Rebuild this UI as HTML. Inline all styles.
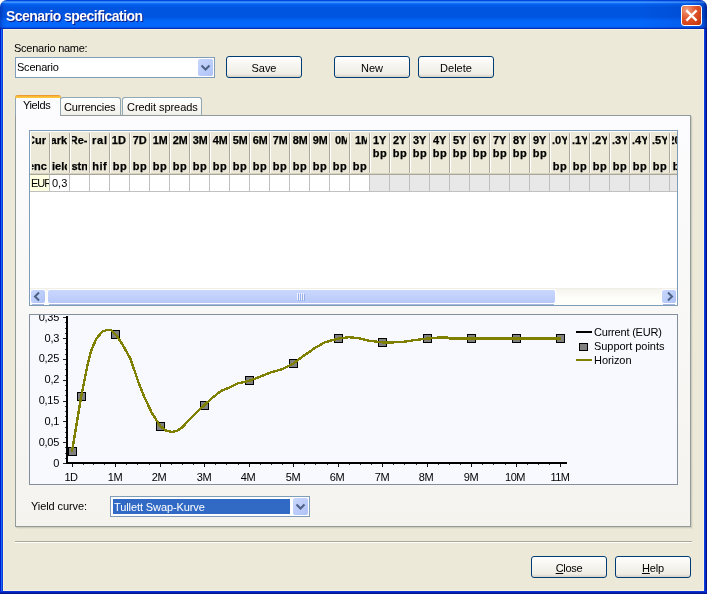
<!DOCTYPE html><html><head><meta charset="utf-8"><title>Scenario specification</title><style>
html,body{margin:0;padding:0;}
body{width:707px;height:594px;overflow:hidden;background:#fff;position:relative;font-family:"Liberation Sans",sans-serif;font-size:11px;line-height:13px;color:#000;}
.abs,.t,.tb{position:absolute;}
.t{white-space:nowrap;font-size:11px;line-height:13px;}
.tb{white-space:nowrap;font-size:11px;line-height:13px;font-weight:bold;}
#win{will-change:transform;position:absolute;left:0;top:0;width:707px;height:594px;border-radius:7px 7px 0 0;overflow:hidden;background:#ECE9D8;}
#title{position:absolute;left:0;top:0;width:707px;height:29px;background:linear-gradient(to bottom,#0046E0 0px,#0046E0 1px,#2C7EF6 1px,#2C7EF6 2px,#3D95FF 2px,#3D95FF 3px,#0A6CFA 3px,#0A6CFA 4px,#0462EE 4px,#0462EE 5px,#025BE6 5px,#025BE6 6px,#0259E4 6px,#0259E4 7px,#0055E0 7px,#0055E0 17px,#0158E6 17px,#0158E6 18px,#025CEB 18px,#025CEB 19px,#0260F0 19px,#0260F0 20px,#0364F6 20px,#0364F6 21px,#0466FA 21px,#0466FA 27px,#0354E3 27px,#0354E3 28px,#0030C0 28px,#0030C0 29px);}
#ttext{position:absolute;left:6px;top:8px;font-weight:bold;font-size:14px;line-height:16px;color:#fff;text-shadow:1px 1px 0 #0A1883;white-space:nowrap;}
#bl{position:absolute;left:0;top:29px;width:3px;height:565px;background:linear-gradient(to right,#0019CF 0,#0019CF 1px,#166AEE 1px,#166AEE 2px,#0A3CE0 2px,#0A3CE0 3px);}
#br{position:absolute;left:704px;top:29px;width:3px;height:565px;background:linear-gradient(to right,#0A3CE0 0,#0A3CE0 1px,#0428C0 1px,#0428C0 2px,#00138C 2px,#00138C 3px);}
#bb{position:absolute;left:0;top:591px;width:707px;height:3px;background:linear-gradient(to bottom,#0A32D8 0,#0A32D8 1px,#0424B8 1px,#0424B8 2px,#00138C 2px,#00138C 3px);}
#hl{position:absolute;left:3px;top:29px;width:701px;height:1px;background:#FBF3DC;}
#close{position:absolute;left:681px;top:5px;width:21px;height:21px;box-sizing:border-box;border:1px solid #fff;border-radius:3px;background:radial-gradient(circle at 25% 20%,#F0A284 0%,#E2582E 40%,#D4441A 70%,#BE3208 100%);}
.btn{position:absolute;width:76px;height:22px;box-sizing:border-box;border:1px solid #003C74;border-radius:3px;background:linear-gradient(to bottom,#FFFFFF 0%,#F6F5F0 40%,#EFEDE4 85%,#D6D0C5 100%);text-align:center;font-size:11px;line-height:22px;}
.combo{position:absolute;width:200px;height:21px;box-sizing:border-box;border:1px solid #7F9DB9;background:#fff;}
.cbtn{position:absolute;right:1px;top:1px;width:15px;height:17px;border-radius:2px;background:linear-gradient(135deg,#C9D7FD 0%,#B9CBF9 60%,#AFC2F7 100%);}
.tab{position:absolute;box-sizing:border-box;border:1px solid #91A7B4;border-bottom:none;border-radius:3px 3px 0 0;background:linear-gradient(to bottom,#FFFFFF,#F3F2EC 90%,#ECEBE6);}
#page{position:absolute;left:15px;top:115px;width:676px;height:412px;box-sizing:border-box;border:1px solid #919B9C;background:linear-gradient(to bottom,#FCFCFE,#F4F3EE);box-shadow:1px 1px 0 #CFCCBC,2px 2px 0 #E2DFD0;}
#grid{position:absolute;left:29px;top:130px;width:649px;height:176px;box-sizing:border-box;border:1px solid #7F9DB9;background:#fff;overflow:hidden;}
#chart{position:absolute;left:29px;top:314px;width:649px;height:171px;box-sizing:border-box;border:1px solid #848E9C;background:#F8F8FF;overflow:hidden;}
.hc{position:absolute;top:1px;width:20px;height:43px;background:#ECE9D8;}
.hc i{position:absolute;left:18px;top:1px;width:1px;height:40px;background:#ACA899;}
.hc b{position:absolute;left:19px;top:1px;width:1px;height:40px;background:#fff;}
.hc .clip{position:absolute;left:1px;top:0;width:15px;height:43px;overflow:hidden;}
.hc .clip span{position:absolute;white-space:nowrap;font-weight:bold;-webkit-text-stroke:0.25px #000;font-size:11px;line-height:13px;}
</style></head><body>
<div id="win">
<div id="title"></div><div class="abs" style="left:0;top:0;width:707px;height:29px;background:linear-gradient(to right,rgba(0,10,120,0.35) 0px,rgba(0,10,120,0.1) 3px,rgba(0,10,120,0) 6px,rgba(0,10,120,0) 640px,rgba(0,10,120,0.1) 690px,rgba(0,10,120,0.25) 703px,rgba(0,0,90,0.6) 707px)"></div>
<div id="ttext" style="letter-spacing:-0.55px">Scenario specification</div>
<div id="close"><svg width="19" height="19" viewBox="0 0 19 19" style="position:absolute;left:0;top:0"><path d="M4.4 4.4 L14.6 14.6 M14.6 4.4 L4.4 14.6" stroke="#fff" stroke-width="2.3" stroke-linecap="butt"/></svg></div>
<div id="hl"></div><div class="abs" style="left:3px;top:29px;width:1px;height:562px;background:#FBF1D9"></div><div class="abs" style="left:3px;top:590px;width:701px;height:1px;background:#FBF1D9"></div><div class="abs" style="left:703px;top:29px;width:1px;height:562px;background:#FBF1D9"></div>
<div id="bl"></div><div id="br"></div><div id="bb"></div>
<span class="t" style="left:14px;top:42px;letter-spacing:-0.26px">Scenario name:</span>
<div class="combo" style="left:15px;top:57px"><span class="t" style="left:1px;top:3px;letter-spacing:-0.22px">Scenario</span><div class="cbtn"><svg width="15" height="17" style="position:absolute;left:0;top:0"><path d="M3.5 6.5 L7.5 10.5 L11.5 6.5" fill="none" stroke="#4D6185" stroke-width="2"/></svg></div></div>
<div class="btn" style="left:226px;top:56px;letter-spacing:-0.08px">Save</div>
<div class="btn" style="left:334px;top:56px;letter-spacing:0.00px">New</div>
<div class="btn" style="left:418px;top:56px;letter-spacing:0.00px">Delete</div>
<div id="page"></div>
<div class="tab" style="left:60px;top:97px;width:61px;height:18px"></div><span class="t" style="left:64px;top:101px;letter-spacing:-0.18px">Currencies</span>
<div class="tab" style="left:122px;top:97px;width:80px;height:18px"></div><span class="t" style="left:127px;top:101px;letter-spacing:-0.06px">Credit spreads</span>
<div class="tab" style="left:15px;top:95px;width:46px;height:21px;background:#FCFCFE;border-top:none"></div>
<div class="abs" style="left:15px;top:95px;width:46px;height:3px;border-radius:3px 3px 0 0;background:linear-gradient(to bottom,#E68B2C 0,#F5A937 1px,#FFC73C 2px,#FFC73C 3px)"></div>
<span class="t" style="left:23px;top:99px;letter-spacing:-0.38px">Yields</span>
<div id="grid">
<div class="abs" style="left:0;top:0;width:647px;height:44px;background:#fff"></div>
<div class="hc" style="left:1px"><i></i><b></b><div class="clip"><span style="left:-5.0px;top:2px">Cur</span><span style="left:-4.0px;top:28px">enc</span></div></div>
<div class="hc" style="left:21px"><i></i><b></b><div class="clip"><span style="left:-1.4px;top:2px">ark</span><span style="left:0.0px;top:28px">ield</span></div></div>
<div class="hc" style="left:41px"><i></i><b></b><div class="clip"><span style="left:-2.2px;top:2px">Re-</span><span style="left:-0.5px;top:28px">stn</span></div></div>
<div class="hc" style="left:61px"><i></i><b></b><div class="clip"><span style="left:0.0px;top:2px;letter-spacing:0.8px">ral</span><span style="left:0.2px;top:28px;letter-spacing:0.5px">hif</span></div></div>
<div class="hc" style="left:81px"><i></i><b></b><div class="clip"><span style="left:-0.2px;top:2px">1D</span><span style="left:0.8px;top:28px;letter-spacing:0.5px">bp</span></div></div>
<div class="hc" style="left:101px"><i></i><b></b><div class="clip"><span style="left:0.7px;top:2px">7D</span><span style="left:0.8px;top:28px;letter-spacing:0.5px">bp</span></div></div>
<div class="hc" style="left:121px"><i></i><b></b><div class="clip"><span style="left:0.7px;top:2px">1M</span><span style="left:0.8px;top:28px;letter-spacing:0.5px">bp</span></div></div>
<div class="hc" style="left:141px"><i></i><b></b><div class="clip"><span style="left:0.7px;top:2px">2M</span><span style="left:0.8px;top:28px;letter-spacing:0.5px">bp</span></div></div>
<div class="hc" style="left:161px"><i></i><b></b><div class="clip"><span style="left:0.7px;top:2px">3M</span><span style="left:0.8px;top:28px;letter-spacing:0.5px">bp</span></div></div>
<div class="hc" style="left:181px"><i></i><b></b><div class="clip"><span style="left:0.7px;top:2px">4M</span><span style="left:0.8px;top:28px;letter-spacing:0.5px">bp</span></div></div>
<div class="hc" style="left:201px"><i></i><b></b><div class="clip"><span style="left:0.7px;top:2px">5M</span><span style="left:0.8px;top:28px;letter-spacing:0.5px">bp</span></div></div>
<div class="hc" style="left:221px"><i></i><b></b><div class="clip"><span style="left:0.7px;top:2px">6M</span><span style="left:0.8px;top:28px;letter-spacing:0.5px">bp</span></div></div>
<div class="hc" style="left:241px"><i></i><b></b><div class="clip"><span style="left:0.7px;top:2px">7M</span><span style="left:0.8px;top:28px;letter-spacing:0.5px">bp</span></div></div>
<div class="hc" style="left:261px"><i></i><b></b><div class="clip"><span style="left:0.7px;top:2px">8M</span><span style="left:0.8px;top:28px;letter-spacing:0.5px">bp</span></div></div>
<div class="hc" style="left:281px"><i></i><b></b><div class="clip"><span style="left:0.7px;top:2px">9M</span><span style="left:0.8px;top:28px;letter-spacing:0.5px">bp</span></div></div>
<div class="hc" style="left:301px"><i></i><b></b><div class="clip"><span style="left:3.0px;top:2px">0M</span><span style="left:0.8px;top:28px;letter-spacing:0.5px">bp</span></div></div>
<div class="hc" style="left:321px"><i></i><b></b><div class="clip"><span style="left:2.9px;top:2px">1M</span><span style="left:0.8px;top:28px;letter-spacing:0.5px">bp</span></div></div>
<div class="hc" style="left:341px"><i></i><b></b><div class="clip"><span style="left:1.0px;top:2px">1Y</span><span style="left:0.8px;top:15px;letter-spacing:0.5px">bp</span></div></div>
<div class="hc" style="left:361px"><i></i><b></b><div class="clip"><span style="left:1.0px;top:2px">2Y</span><span style="left:0.8px;top:15px;letter-spacing:0.5px">bp</span></div></div>
<div class="hc" style="left:381px"><i></i><b></b><div class="clip"><span style="left:1.0px;top:2px">3Y</span><span style="left:0.8px;top:15px;letter-spacing:0.5px">bp</span></div></div>
<div class="hc" style="left:401px"><i></i><b></b><div class="clip"><span style="left:1.0px;top:2px">4Y</span><span style="left:0.8px;top:15px;letter-spacing:0.5px">bp</span></div></div>
<div class="hc" style="left:421px"><i></i><b></b><div class="clip"><span style="left:1.0px;top:2px">5Y</span><span style="left:0.8px;top:15px;letter-spacing:0.5px">bp</span></div></div>
<div class="hc" style="left:441px"><i></i><b></b><div class="clip"><span style="left:1.0px;top:2px">6Y</span><span style="left:0.8px;top:15px;letter-spacing:0.5px">bp</span></div></div>
<div class="hc" style="left:461px"><i></i><b></b><div class="clip"><span style="left:1.0px;top:2px">7Y</span><span style="left:0.8px;top:15px;letter-spacing:0.5px">bp</span></div></div>
<div class="hc" style="left:481px"><i></i><b></b><div class="clip"><span style="left:1.0px;top:2px">8Y</span><span style="left:0.8px;top:15px;letter-spacing:0.5px">bp</span></div></div>
<div class="hc" style="left:501px"><i></i><b></b><div class="clip"><span style="left:1.0px;top:2px">9Y</span><span style="left:0.8px;top:15px;letter-spacing:0.5px">bp</span></div></div>
<div class="hc" style="left:521px"><i></i><b></b><div class="clip"><span style="left:0.0px;top:2px">.0Y</span><span style="left:0.8px;top:28px;letter-spacing:0.5px">bp</span></div></div>
<div class="hc" style="left:541px"><i></i><b></b><div class="clip"><span style="left:0.0px;top:2px">.1Y</span><span style="left:0.8px;top:28px;letter-spacing:0.5px">bp</span></div></div>
<div class="hc" style="left:561px"><i></i><b></b><div class="clip"><span style="left:0.0px;top:2px">.2Y</span><span style="left:0.8px;top:28px;letter-spacing:0.5px">bp</span></div></div>
<div class="hc" style="left:581px"><i></i><b></b><div class="clip"><span style="left:0.0px;top:2px">.3Y</span><span style="left:0.8px;top:28px;letter-spacing:0.5px">bp</span></div></div>
<div class="hc" style="left:601px"><i></i><b></b><div class="clip"><span style="left:0.0px;top:2px">.4Y</span><span style="left:0.8px;top:28px;letter-spacing:0.5px">bp</span></div></div>
<div class="hc" style="left:621px"><i></i><b></b><div class="clip"><span style="left:0.0px;top:2px">.5Y</span><span style="left:0.8px;top:28px;letter-spacing:0.5px">bp</span></div></div>
<div class="hc" style="left:641px"><i></i><b></b><div class="clip"><span style="left:-3.5px;top:2px">20</span><span style="left:0.8px;top:28px;letter-spacing:0.5px">bp</span></div></div>
<div class="abs" style="left:0;top:42px;width:647px;height:1px;background:#D6D2C2"></div>
<div class="abs" style="left:0;top:43px;width:647px;height:1px;background:#ACA899"></div>
<div class="abs" style="left:0;top:44px;width:647px;height:16px;background:#fff"></div>
<div class="abs" style="left:0;top:44px;width:19px;height:16px;background:#FFFFE1;overflow:hidden"><span class="t" style="left:1px;top:2px;letter-spacing:-1px">EUR</span></div>
<div class="abs" style="left:20px;top:44px;width:19px;height:16px;overflow:hidden"><span class="t" style="left:2px;top:2px">0,3</span></div>
<div class="abs" style="left:340px;top:44px;width:307px;height:16px;background:#E8E8E8"></div>
<div class="abs" style="left:19px;top:44px;width:1px;height:16px;background:#C0C0C0"></div>
<div class="abs" style="left:39px;top:44px;width:1px;height:16px;background:#C0C0C0"></div>
<div class="abs" style="left:59px;top:44px;width:1px;height:16px;background:#C0C0C0"></div>
<div class="abs" style="left:79px;top:44px;width:1px;height:16px;background:#C0C0C0"></div>
<div class="abs" style="left:99px;top:44px;width:1px;height:16px;background:#C0C0C0"></div>
<div class="abs" style="left:119px;top:44px;width:1px;height:16px;background:#C0C0C0"></div>
<div class="abs" style="left:139px;top:44px;width:1px;height:16px;background:#C0C0C0"></div>
<div class="abs" style="left:159px;top:44px;width:1px;height:16px;background:#C0C0C0"></div>
<div class="abs" style="left:179px;top:44px;width:1px;height:16px;background:#C0C0C0"></div>
<div class="abs" style="left:199px;top:44px;width:1px;height:16px;background:#C0C0C0"></div>
<div class="abs" style="left:219px;top:44px;width:1px;height:16px;background:#C0C0C0"></div>
<div class="abs" style="left:239px;top:44px;width:1px;height:16px;background:#C0C0C0"></div>
<div class="abs" style="left:259px;top:44px;width:1px;height:16px;background:#C0C0C0"></div>
<div class="abs" style="left:279px;top:44px;width:1px;height:16px;background:#C0C0C0"></div>
<div class="abs" style="left:299px;top:44px;width:1px;height:16px;background:#C0C0C0"></div>
<div class="abs" style="left:319px;top:44px;width:1px;height:16px;background:#C0C0C0"></div>
<div class="abs" style="left:339px;top:44px;width:1px;height:16px;background:#C0C0C0"></div>
<div class="abs" style="left:359px;top:44px;width:1px;height:16px;background:#C0C0C0"></div>
<div class="abs" style="left:379px;top:44px;width:1px;height:16px;background:#C0C0C0"></div>
<div class="abs" style="left:399px;top:44px;width:1px;height:16px;background:#C0C0C0"></div>
<div class="abs" style="left:419px;top:44px;width:1px;height:16px;background:#C0C0C0"></div>
<div class="abs" style="left:439px;top:44px;width:1px;height:16px;background:#C0C0C0"></div>
<div class="abs" style="left:459px;top:44px;width:1px;height:16px;background:#C0C0C0"></div>
<div class="abs" style="left:479px;top:44px;width:1px;height:16px;background:#C0C0C0"></div>
<div class="abs" style="left:499px;top:44px;width:1px;height:16px;background:#C0C0C0"></div>
<div class="abs" style="left:519px;top:44px;width:1px;height:16px;background:#C0C0C0"></div>
<div class="abs" style="left:539px;top:44px;width:1px;height:16px;background:#C0C0C0"></div>
<div class="abs" style="left:559px;top:44px;width:1px;height:16px;background:#C0C0C0"></div>
<div class="abs" style="left:579px;top:44px;width:1px;height:16px;background:#C0C0C0"></div>
<div class="abs" style="left:599px;top:44px;width:1px;height:16px;background:#C0C0C0"></div>
<div class="abs" style="left:619px;top:44px;width:1px;height:16px;background:#C0C0C0"></div>
<div class="abs" style="left:639px;top:44px;width:1px;height:16px;background:#C0C0C0"></div>
<div class="abs" style="left:659px;top:44px;width:1px;height:16px;background:#C0C0C0"></div>
<div class="abs" style="left:0;top:60px;width:647px;height:1px;background:#C0C0C0"></div>
<div class="abs" style="left:0;top:157px;width:647px;height:17px;background:linear-gradient(to bottom,#EEEDE5 0,#F6F5EF 2px,#FEFEFB 10px,#FEFEFB 17px)"></div>
<div class="abs" style="left:0px;top:158px;width:16px;height:15px;background:#fff;border-radius:3px"></div><div class="abs" style="left:1px;top:159px;width:14px;height:13px;border-radius:2px;background:linear-gradient(135deg,#C9D7FD 0%,#B9CBF9 60%,#AFC2F7 100%)"><svg width="14" height="13" style="position:absolute;left:0;top:0"><path d="M8.5 4 L4.5 8 L8.5 12" transform="translate(-0.5,-1.5)" fill="none" stroke="#4D6185" stroke-width="2"/></svg></div>
<div class="abs" style="left:631px;top:158px;width:16px;height:15px;background:#fff;border-radius:3px"></div><div class="abs" style="left:632px;top:159px;width:14px;height:13px;border-radius:2px;background:linear-gradient(135deg,#C9D7FD 0%,#B9CBF9 60%,#AFC2F7 100%)"><svg width="14" height="13" style="position:absolute;left:0;top:0"><path d="M6.5 4 L10.5 8 L6.5 12" transform="translate(-0.5,-1.5)" fill="none" stroke="#4D6185" stroke-width="2"/></svg></div>
<div class="abs" style="left:17px;top:158px;width:509px;height:15px;background:#fff;border-radius:3px"></div>
<div class="abs" style="left:18px;top:159px;width:507px;height:13px;border-radius:2px;background:linear-gradient(to bottom,#C9D7FD 0%,#C2D1FB 50%,#B7C8F8 100%)"></div>
<div class="abs" style="left:19px;top:173px;width:505px;height:1px;background:#A9B6DE"></div>
<div class="abs" style="left:2px;top:173px;width:12px;height:1px;background:#A9B6DE"></div>
<div class="abs" style="left:633px;top:173px;width:12px;height:1px;background:#A9B6DE"></div>
<div class="abs" style="left:267px;top:162px;width:1px;height:7px;background:#EEF2FE"></div>
<div class="abs" style="left:268px;top:163px;width:1px;height:7px;background:#98AEE8"></div>
<div class="abs" style="left:269px;top:162px;width:1px;height:7px;background:#EEF2FE"></div>
<div class="abs" style="left:270px;top:163px;width:1px;height:7px;background:#98AEE8"></div>
<div class="abs" style="left:271px;top:162px;width:1px;height:7px;background:#EEF2FE"></div>
<div class="abs" style="left:272px;top:163px;width:1px;height:7px;background:#98AEE8"></div>
<div class="abs" style="left:273px;top:162px;width:1px;height:7px;background:#EEF2FE"></div>
<div class="abs" style="left:274px;top:163px;width:1px;height:7px;background:#98AEE8"></div>
</div>
<div id="chart"></div>
<svg class="abs" style="left:0;top:0" width="707" height="594" viewBox="0 0 707 594">
<defs><clipPath id="cc"><rect x="30" y="315" width="647" height="169"/></clipPath></defs>
<g clip-path="url(#cc)">
<rect x="66" y="316" width="2" height="148" fill="#000"/>
<rect x="66" y="462" width="501" height="2" fill="#000"/>
<rect x="63" y="463" width="3" height="1" fill="#222"/>
<rect x="65" y="458" width="1" height="1" fill="#444"/>
<rect x="65" y="453" width="1" height="1" fill="#444"/>
<rect x="65" y="447" width="1" height="1" fill="#444"/>
<rect x="63" y="442" width="3" height="1" fill="#222"/>
<rect x="65" y="437" width="1" height="1" fill="#444"/>
<rect x="65" y="432" width="1" height="1" fill="#444"/>
<rect x="65" y="427" width="1" height="1" fill="#444"/>
<rect x="63" y="421" width="3" height="1" fill="#222"/>
<rect x="65" y="416" width="1" height="1" fill="#444"/>
<rect x="65" y="411" width="1" height="1" fill="#444"/>
<rect x="65" y="406" width="1" height="1" fill="#444"/>
<rect x="63" y="401" width="3" height="1" fill="#222"/>
<rect x="65" y="395" width="1" height="1" fill="#444"/>
<rect x="65" y="390" width="1" height="1" fill="#444"/>
<rect x="65" y="385" width="1" height="1" fill="#444"/>
<rect x="63" y="380" width="3" height="1" fill="#222"/>
<rect x="65" y="375" width="1" height="1" fill="#444"/>
<rect x="65" y="369" width="1" height="1" fill="#444"/>
<rect x="65" y="364" width="1" height="1" fill="#444"/>
<rect x="63" y="359" width="3" height="1" fill="#222"/>
<rect x="65" y="354" width="1" height="1" fill="#444"/>
<rect x="65" y="349" width="1" height="1" fill="#444"/>
<rect x="65" y="343" width="1" height="1" fill="#444"/>
<rect x="63" y="338" width="3" height="1" fill="#222"/>
<rect x="65" y="333" width="1" height="1" fill="#444"/>
<rect x="65" y="328" width="1" height="1" fill="#444"/>
<rect x="65" y="322" width="1" height="1" fill="#444"/>
<rect x="63" y="317" width="3" height="1" fill="#222"/>
<rect x="83" y="464" width="1" height="1" fill="#333"/>
<rect x="93" y="464" width="1" height="1" fill="#333"/>
<rect x="104" y="464" width="1" height="1" fill="#333"/>
<rect x="126" y="464" width="1" height="1" fill="#333"/>
<rect x="137" y="464" width="1" height="1" fill="#333"/>
<rect x="149" y="464" width="1" height="1" fill="#333"/>
<rect x="171" y="464" width="1" height="1" fill="#333"/>
<rect x="182" y="464" width="1" height="1" fill="#333"/>
<rect x="193" y="464" width="1" height="1" fill="#333"/>
<rect x="215" y="464" width="1" height="1" fill="#333"/>
<rect x="226" y="464" width="1" height="1" fill="#333"/>
<rect x="238" y="464" width="1" height="1" fill="#333"/>
<rect x="260" y="464" width="1" height="1" fill="#333"/>
<rect x="271" y="464" width="1" height="1" fill="#333"/>
<rect x="282" y="464" width="1" height="1" fill="#333"/>
<rect x="304" y="464" width="1" height="1" fill="#333"/>
<rect x="315" y="464" width="1" height="1" fill="#333"/>
<rect x="327" y="464" width="1" height="1" fill="#333"/>
<rect x="349" y="464" width="1" height="1" fill="#333"/>
<rect x="360" y="464" width="1" height="1" fill="#333"/>
<rect x="371" y="464" width="1" height="1" fill="#333"/>
<rect x="393" y="464" width="1" height="1" fill="#333"/>
<rect x="404" y="464" width="1" height="1" fill="#333"/>
<rect x="416" y="464" width="1" height="1" fill="#333"/>
<rect x="438" y="464" width="1" height="1" fill="#333"/>
<rect x="449" y="464" width="1" height="1" fill="#333"/>
<rect x="460" y="464" width="1" height="1" fill="#333"/>
<rect x="482" y="464" width="1" height="1" fill="#333"/>
<rect x="493" y="464" width="1" height="1" fill="#333"/>
<rect x="505" y="464" width="1" height="1" fill="#333"/>
<rect x="527" y="464" width="1" height="1" fill="#333"/>
<rect x="538" y="464" width="1" height="1" fill="#333"/>
<rect x="549" y="464" width="1" height="1" fill="#333"/>
<rect x="72" y="464" width="1" height="3" fill="#111"/>
<rect x="115" y="464" width="1" height="3" fill="#111"/>
<rect x="160" y="464" width="1" height="3" fill="#111"/>
<rect x="204" y="464" width="1" height="3" fill="#111"/>
<rect x="249" y="464" width="1" height="3" fill="#111"/>
<rect x="293" y="464" width="1" height="3" fill="#111"/>
<rect x="338" y="464" width="1" height="3" fill="#111"/>
<rect x="382" y="464" width="1" height="3" fill="#111"/>
<rect x="427" y="464" width="1" height="3" fill="#111"/>
<rect x="471" y="464" width="1" height="3" fill="#111"/>
<rect x="516" y="464" width="1" height="3" fill="#111"/>
<rect x="560" y="464" width="1" height="3" fill="#111"/>
<rect x="68.5" y="447.5" width="8" height="8" fill="#808080" stroke="#000" stroke-width="1"/>
<rect x="77.5" y="392.5" width="8" height="8" fill="#808080" stroke="#000" stroke-width="1"/>
<rect x="111.5" y="330.5" width="8" height="8" fill="#808080" stroke="#000" stroke-width="1"/>
<rect x="156.5" y="422.5" width="8" height="8" fill="#808080" stroke="#000" stroke-width="1"/>
<rect x="200.5" y="401.5" width="8" height="8" fill="#808080" stroke="#000" stroke-width="1"/>
<rect x="245.5" y="376.5" width="8" height="8" fill="#808080" stroke="#000" stroke-width="1"/>
<rect x="289.5" y="359.5" width="8" height="8" fill="#808080" stroke="#000" stroke-width="1"/>
<rect x="334.5" y="334.5" width="8" height="8" fill="#808080" stroke="#000" stroke-width="1"/>
<rect x="378.5" y="338.5" width="8" height="8" fill="#808080" stroke="#000" stroke-width="1"/>
<rect x="423.5" y="334.5" width="8" height="8" fill="#808080" stroke="#000" stroke-width="1"/>
<rect x="467.5" y="334.5" width="8" height="8" fill="#808080" stroke="#000" stroke-width="1"/>
<rect x="512.5" y="334.5" width="8" height="8" fill="#808080" stroke="#000" stroke-width="1"/>
<rect x="556.5" y="334.5" width="8" height="8" fill="#808080" stroke="#000" stroke-width="1"/>
<polyline fill="none" stroke="#808000" stroke-width="2.4" stroke-linejoin="round" shape-rendering="crispEdges" points="71.9,451.8 77.0,421.5 81.2,396.6 86.9,367.7 91.1,350.8 96.2,338.9 102.4,331.5 107.5,329.8 111.5,330.4 115.7,334.4 122.8,345.1 130.7,359.3 137.8,380.5 144.9,398.3 151.9,413.0 160.4,426.3 166.1,430.5 171.7,432.0 176.5,431.1 181.6,428.0 193.0,415.8 204.3,405.1 212.8,397.4 221.2,390.9 229.7,387.5 238.2,383.3 249.3,380.8 259.8,376.8 271.1,372.3 282.4,369.2 293.2,363.5 303.6,355.9 315.0,347.9 324.9,342.3 338.2,338.6 348.9,337.2 358.8,338.3 370.1,340.9 382.3,342.3 394.2,342.3 404.0,341.7 415.4,340.0 427.3,338.6 436.0,337.9 440.0,337.4 447.0,337.4 449.0,338.4 471.7,338.4 516.2,338.4 560.7,338.4"/>
<rect x="576" y="331" width="16" height="2" fill="#000"/>
<rect x="579.5" y="343.5" width="8" height="7" fill="#808080" stroke="#000" stroke-width="1"/>
<rect x="576" y="359" width="16" height="2" fill="#808000"/>
</g></svg>
<div class="abs" style="left:30px;top:315px;width:647px;height:169px;overflow:hidden">
<span class="t" style="right:618px;top:142px;letter-spacing:-0.3px">0</span>
<span class="t" style="right:618px;top:121px;letter-spacing:-0.3px">0,05</span>
<span class="t" style="right:618px;top:100px;letter-spacing:-0.3px">0,1</span>
<span class="t" style="right:618px;top:79px;letter-spacing:-0.3px">0,15</span>
<span class="t" style="right:618px;top:58px;letter-spacing:-0.3px">0,2</span>
<span class="t" style="right:618px;top:37px;letter-spacing:-0.3px">0,25</span>
<span class="t" style="right:618px;top:17px;letter-spacing:-0.3px">0,3</span>
<span class="t" style="right:618px;top:-4px;letter-spacing:-0.3px">0,35</span>
<span class="t" style="left:21px;top:156px;width:40px;text-align:center;letter-spacing:-0.5px">1D</span>
<span class="t" style="left:65px;top:156px;width:40px;text-align:center;letter-spacing:-0.5px">1M</span>
<span class="t" style="left:109px;top:156px;width:40px;text-align:center;letter-spacing:-0.5px">2M</span>
<span class="t" style="left:154px;top:156px;width:40px;text-align:center;letter-spacing:-0.5px">3M</span>
<span class="t" style="left:198px;top:156px;width:40px;text-align:center;letter-spacing:-0.5px">4M</span>
<span class="t" style="left:243px;top:156px;width:40px;text-align:center;letter-spacing:-0.5px">5M</span>
<span class="t" style="left:287px;top:156px;width:40px;text-align:center;letter-spacing:-0.5px">6M</span>
<span class="t" style="left:332px;top:156px;width:40px;text-align:center;letter-spacing:-0.5px">7M</span>
<span class="t" style="left:376px;top:156px;width:40px;text-align:center;letter-spacing:-0.5px">8M</span>
<span class="t" style="left:421px;top:156px;width:40px;text-align:center;letter-spacing:-0.5px">9M</span>
<span class="t" style="left:465px;top:156px;width:40px;text-align:center;letter-spacing:-0.5px">10M</span>
<span class="t" style="left:510px;top:156px;width:40px;text-align:center;letter-spacing:-0.5px">11M</span>
<span class="t" style="left:564px;top:11px;letter-spacing:-0.2px">Current (EUR)</span>
<span class="t" style="left:564px;top:25px;letter-spacing:-0.04px">Support points</span>
<span class="t" style="left:564px;top:39px;letter-spacing:-0.06px">Horizon</span>
</div>
<span class="t" style="left:31px;top:500px;letter-spacing:-0.09px">Yield curve:</span>
<div class="combo" style="left:110px;top:496px"><div class="abs" style="left:2px;top:2px;width:177px;height:15px;background:#316AC5"></div><span class="t" style="left:3px;top:4px;color:#fff;letter-spacing:-0.10px">Tullett Swap-Kurve</span><div class="cbtn"><svg width="15" height="17" style="position:absolute;left:0;top:0"><path d="M3.5 6.5 L7.5 10.5 L11.5 6.5" fill="none" stroke="#4D6185" stroke-width="2"/></svg></div></div>
<div class="abs" style="left:15px;top:541px;width:677px;height:1px;background:#ACA899"></div>
<div class="abs" style="left:15px;top:542px;width:677px;height:1px;background:#fff"></div>
<div class="btn" style="left:531px;top:556px;letter-spacing:-0.28px"><u>C</u>lose</div>
<div class="btn" style="left:615px;top:556px;letter-spacing:-0.12px"><u>H</u>elp</div>
</div></body></html>
